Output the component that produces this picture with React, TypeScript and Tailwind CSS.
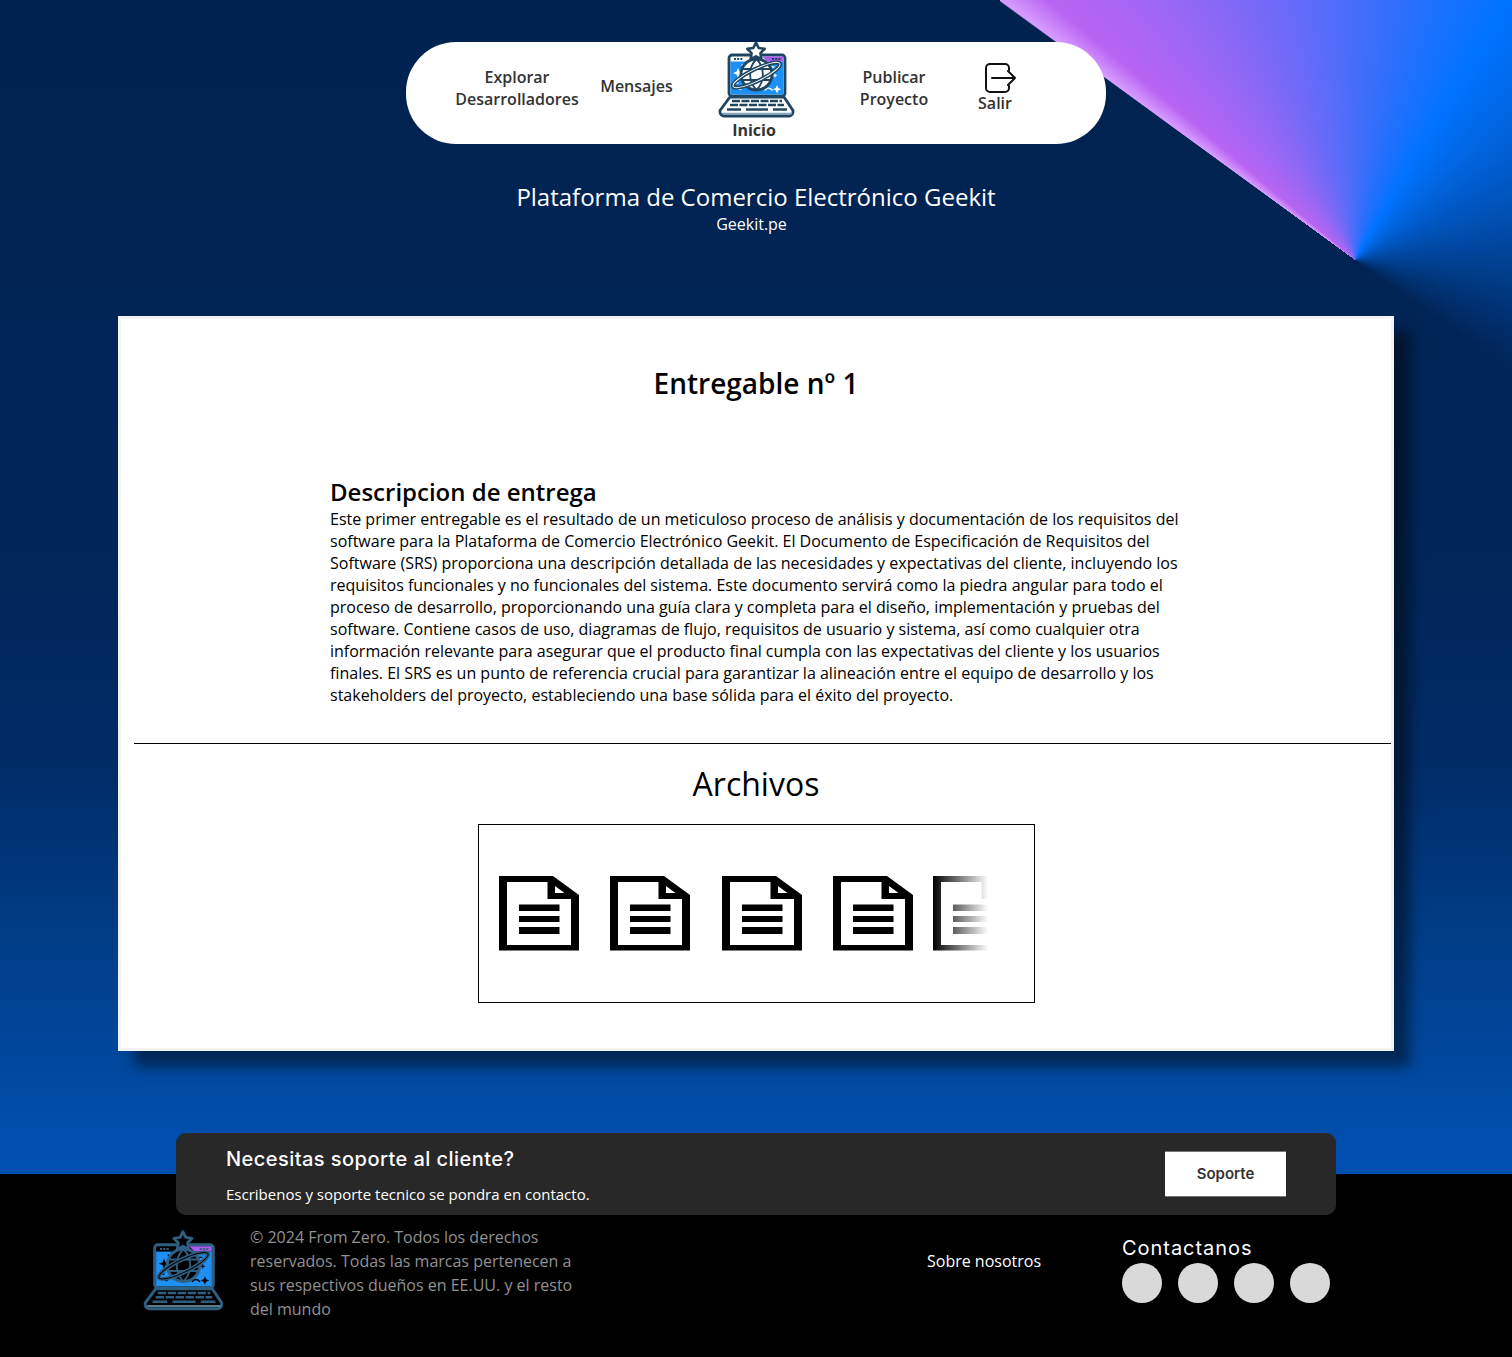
const sans = "font-['Open_Sans',sans-serif]";

const Logo = ({ stroke, body, size }: { stroke: string; body: string; size: string }) => (
  <svg viewBox="0 0 85 85" className={size} fill="none">
    <rect x="14" y="17" width="56" height="41" rx="3" fill={body} stroke={stroke} strokeWidth="2.800" />
    <rect x="15.400" y="23.500" width="53.200" height="33" fill="#1c90f5" />
    <path d="M47 18.400h21.600v5.100H52z" fill="#a95ce8" />
    <path d="M19 21h9M57 21h9" stroke={stroke} strokeWidth="2" strokeDasharray="2 1.200" />
    <path d="M41 4.500l2.700 5.500 6 .9-4.300 4.200 1 6-5.400-2.800-5.400 2.800 1-6-4.300-4.200 6-.9z" fill={body} stroke={stroke} strokeWidth="2.600" strokeLinejoin="round" />
    <path d="M23 30l1.400 3.600 3.600 1.400-3.600 1.400-1.400 3.600-1.400-3.600-3.600-1.400 3.600-1.400zM62 47l1.200 3 3 1.200-3 1.200-1.200 3-1.200-3-3-1.200 3-1.200zM60 35l.7 1.800 1.800.7-1.800.7-.7 1.800-.7-1.800-1.800-.7 1.800-.7z" fill={body} />
    <path d="M27 27h4M34 25h2M56 29h3M20 45h3M24 51h2M50 52c2-2.500 5-2.500 7 0" stroke={body} strokeWidth="1.400" strokeLinecap="round" />
    <circle cx="41.500" cy="36.500" r="15.500" fill={body} stroke={stroke} strokeWidth="2.800" />
    <path d="M41.500 21c-8.500 8.500-8.500 22.500 0 31M41.500 21c8.500 8.500 8.500 22.500 0 31M27 31h29M27 42h29" stroke={stroke} strokeWidth="1.800" />
    <ellipse cx="41.500" cy="37" rx="26" ry="6" transform="rotate(-26 41.500 37)" stroke={stroke} strokeWidth="4" />
    <ellipse cx="41.500" cy="37" rx="26" ry="6" transform="rotate(-26 41.500 37)" stroke={body} strokeWidth="1" />
    <path d="M15 59h54l9 13.500V74a4 4 0 0 1-4 4H9a4 4 0 0 1-4-4v-1.500z" fill={body} stroke={stroke} strokeWidth="2.800" strokeLinejoin="round" />
    <path d="M17 63h50M15 67h54" stroke={stroke} strokeWidth="2.400" strokeDasharray="8 1.500" />
    <path d="M12 71.500h14M58 71.500h14M31 71.500h22" stroke={stroke} strokeWidth="2.400" />
    <path d="M7 75.500h70" stroke="#7fa3b8" strokeWidth="1.500" />
  </svg>
);

const DocIcon = () => (
  <svg viewBox="0 0 80 74.500" className="h-[74.500px] w-[80px] shrink-0">
    <path
      fillRule="evenodd"
      d="M0 0h54l26 19v55.500H0zM8 6v63h64V23H48.500V6zM56 10v7h9.500z"
    />
    <path d="M20 28.500h40.500V35H20zM20 40h40.500v6H20zM20 51h40.500v7H20z" />
  </svg>
);

export default function App() {
  return (
    <div className={`min-h-[1357px] bg-black ${sans}`}>
      <div className="relative flex h-[1174px] flex-col items-center overflow-hidden bg-[linear-gradient(180deg,#00224f_0%,#00265a_50%,#002c66_65%,#003d87_80%,#004da8_95%,#0050b4_100%)]">
        <div className="absolute right-0 top-0 h-[420px] w-[512px] bg-[conic-gradient(from_306.200deg_at_355px_260px,#d89cff_0deg,#b964f2_4deg,#0073ff_84deg,#00224f00_180deg,#00224f00_359.800deg,#d89cff_360deg)]" />

        {/* nav */}
        <nav className="relative mt-[42px] flex h-[102px] w-[700px] rounded-[50px] bg-white pl-[49px] text-[16px] font-semibold leading-[22px] text-[#333]">
          <a className="mt-[24px] w-[124px] text-center">Explorar Desarrolladores</a>
          <a className="ml-[21px] mt-[33px] w-[73px] text-center">Mensajes</a>
          <div className="ml-[42px] flex w-[85px] flex-col items-center">
            <div className="-mt-[4px]">
              <Logo stroke="#1f4560" body="#ffffff" size="h-[85px] w-[85px]" />
            </div>
            <span className="-mt-[4px] -ml-[7px] font-bold leading-[22px]">Inicio</span>
          </div>
          <a className="ml-[58px] mt-[24px] w-[72px] text-center">Publicar Proyecto</a>
          <div className="ml-[44px] flex flex-col items-center">
            <svg viewBox="0 0 32 32" className="ml-[10px] mt-[20px] h-[32px] w-[32px]" fill="none" stroke="#111" strokeWidth="2" strokeLinecap="round" strokeLinejoin="round">
              <path d="M25 8V6a4 4 0 0 0-4-4H6a4 4 0 0 0-4 4v20a4 4 0 0 0 4 4h15a4 4 0 0 0 4-4v-2" />
              <path d="M8 16h23M24 9l7 7-7 7" />
            </svg>
            <span className="-mt-[2px]">Salir</span>
          </div>
        </nav>

        <h1 className="relative mt-[36px] text-[24px] leading-[33px] text-white">Plataforma de Comercio Electrónico Geekit</h1>
        <p className="relative -ml-[9px] text-[16px] leading-[22px] text-white">Geekit.pe</p>

        {/* card */}
        <main className="relative mt-[81px] flex h-[735px] w-[1276px] flex-col items-center border-[3px] border-[#f3f3f3] bg-white shadow-[16px_16px_12px_rgba(0,0,0,0.45)]">
          <h2 className="mt-[45px] text-[28px] font-semibold leading-[38px] text-black">Entregable nº 1</h2>
          <section className="mt-[73px] w-full pl-[209px] pr-[210px] text-black">
            <h3 className="text-[24px] font-semibold leading-[33px]">Descripcion de entrega</h3>
            <p className="text-[16px] leading-[22px]">
              Este primer entregable es el resultado de un meticuloso proceso de análisis y documentación de los requisitos del software para la Plataforma de Comercio Electrónico Geekit. El Documento de Especificación de Requisitos del Software (SRS) proporciona una descripción detallada de las necesidades y expectativas del cliente, incluyendo los requisitos funcionales y no funcionales del sistema. Este documento servirá como la piedra angular para todo el proceso de desarrollo, proporcionando una guía clara y completa para el diseño, implementación y pruebas del software. Contiene casos de uso, diagramas de flujo, requisitos de usuario y sistema, así como cualquier otra información relevante para asegurar que el producto final cumpla con las expectativas del cliente y los usuarios finales. El SRS es un punto de referencia crucial para garantizar la alineación entre el equipo de desarrollo y los stakeholders del proyecto, estableciendo una base sólida para el éxito del proyecto.
            </p>
          </section>
          <hr className="ml-[13px] mt-[37px] h-px w-[1257px] self-start border-0 bg-black" />
          <h2 className="mt-[18px] text-[32px] leading-[44px] text-black">Archivos</h2>
          <div className="mt-[18px] flex h-[179px] w-[557px] items-center border border-black pl-[20.500px]">
            <div className="relative flex h-[75px] w-[489px] overflow-hidden">
              <div className="flex gap-[31.400px]">
                <DocIcon />
                <DocIcon />
                <DocIcon />
                <DocIcon />
              </div>
              <div className="ml-[20px]">
                <DocIcon />
              </div>
              <div className="absolute right-0 top-0 h-full w-[55px] bg-gradient-to-r from-transparent to-white" />
            </div>
          </div>
        </main>
      </div>

      {/* footer */}
      <footer className="flex h-[183px] flex-col bg-black">
        <div className="relative mx-auto -mt-[41px] flex h-[82px] w-[1160px] shrink-0 items-center justify-between rounded-[10px] bg-[#282828] px-[50px]">
          <div>
            <p className="font-['Inter',sans-serif] text-[20px] font-medium leading-[30px] tracking-[0.45px] text-white">Necesitas soporte al cliente?</p>
            <p className="mt-[10px] text-[15px] leading-[20px] text-white">Escribenos y soporte tecnico se pondra en contacto.</p>
          </div>
          <button className="h-[46px] w-[121px] border-y border-[#777] bg-white font-['Inter',sans-serif] text-[15px] font-semibold text-[#333]">Soporte</button>
        </div>
        <div className="flex items-start pl-[140px] pt-[10px]">
          <div className="mt-[2px] shrink-0">
            <Logo stroke="#2f5f80" body="#000000" size="h-[89px] w-[89px]" />
          </div>
          <p className="ml-[21px] w-[330px] text-[16px] leading-[24px] text-[#919191]">
            © 2024 From Zero. Todos los derechos reservados. Todas las marcas pertenecen a sus respectivos dueños en EE.UU. y el resto del mundo
          </p>
          <a className="ml-[347px] mt-[24px] text-[16px] leading-[24px] text-white">Sobre nosotros</a>
          <div className="ml-[81px] mt-[8px]">
            <p className="font-['Inter',sans-serif] text-[20px] font-normal leading-[30px] tracking-[0.95px] text-white">Contactanos</p>
            <div className="flex gap-[16px]">
              <span className="h-[40px] w-[40px] rounded-full bg-[#d9d9d9]" />
              <span className="h-[40px] w-[40px] rounded-full bg-[#d9d9d9]" />
              <span className="h-[40px] w-[40px] rounded-full bg-[#d9d9d9]" />
              <span className="h-[40px] w-[40px] rounded-full bg-[#d9d9d9]" />
            </div>
          </div>
        </div>
      </footer>
    </div>
  );
}
